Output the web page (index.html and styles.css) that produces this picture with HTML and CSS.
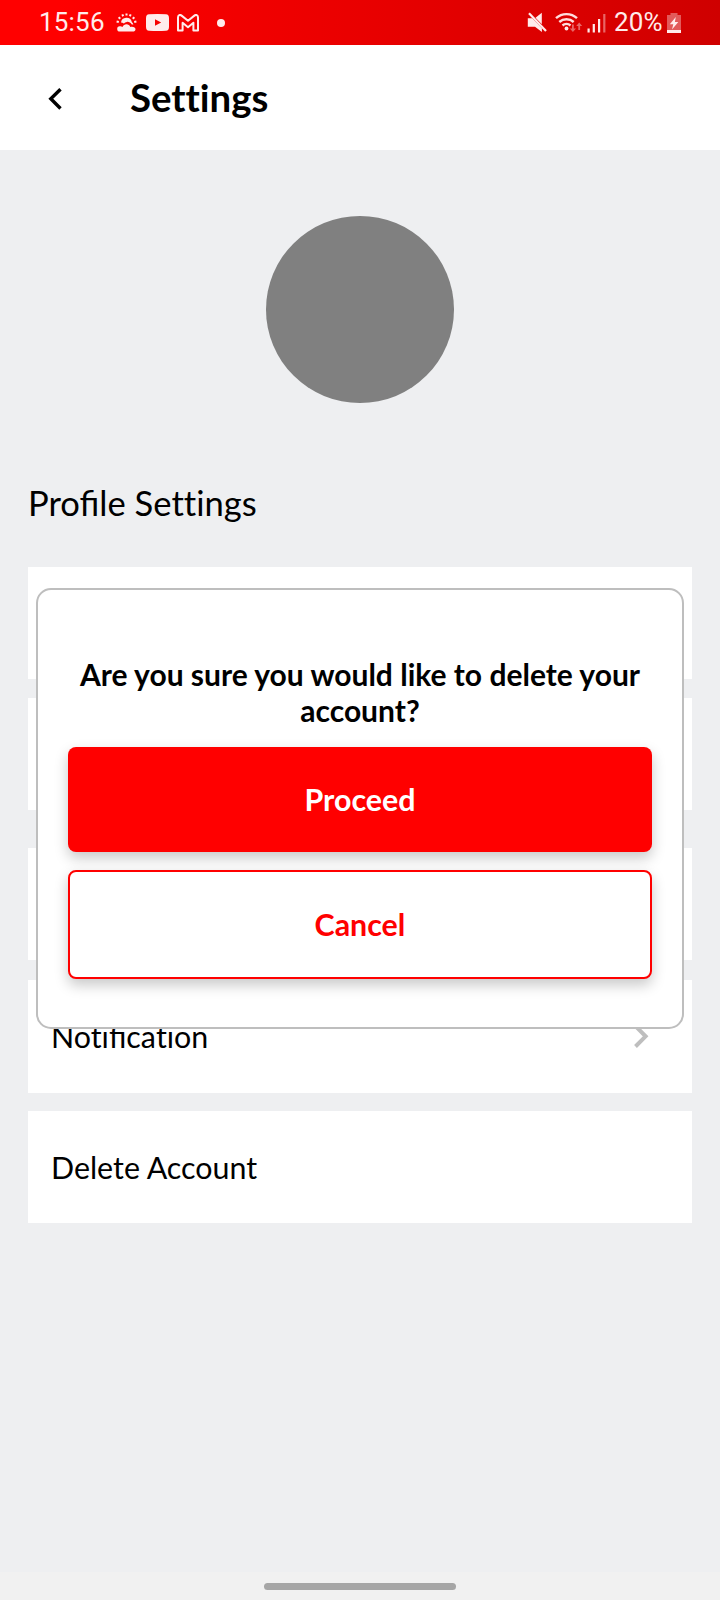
FILE: index.html
```html
<!DOCTYPE html>
<html lang="en">
<head>
<meta charset="utf-8">
<title>Settings</title>
<link rel="stylesheet" href="styles.css">
</head>
<body>
<div class="screen">
  <div class="status">
    <div class="status-left">
      <span class="time">15:56</span>
      <svg class="icon" width="22" height="20" viewBox="0 0 22 20">
        <path d="M5 9.600a5.500 5.500 0 0 1 10.800-.6c.9.700 1.400 1.500 1.600 2.500h-1.600c-1.300-2.100-3.100-2.900-5-2.600-1.200.2-2.200.8-2.900 1.700-1-.6-1.900-.9-2.900-1z"/>
        <path d="M4 18.600a2.700 2.700 0 0 1-.2-5.400c1-.1 1.900.1 2.700.7.8-1.700 2.200-2.600 3.900-2.600 1.900 0 3.300 1 3.900 2.600 3.100-.6 5.200.5 5.200 2.300 0 1.400-1.200 2.400-2.700 2.400z"/>
        <path class="rays" d="M10.500.4v2.200M6.300 1.400l.9 1.900M14.700 1.400l-.9 1.900M2.600 4.300l1.700 1.400M18.400 4.300l-1.700 1.400M.6 8.500l2.200.5M20.400 8.500l-2.200.5"/>
      </svg>
      <svg class="icon youtube" width="23" height="17" viewBox="0 0 23 17">
        <path fill-rule="evenodd" d="M3 .3Q11.500-.3 20 .3q3 .2 3 4v8.400q0 3.800-3 4-8.500.6-17 0-3-.2-3-4V4.300Q0 .5 3 .3zM9 5.200v6.600l6.200-3.300z"/>
      </svg>
      <svg class="icon gmail" width="23" height="18" viewBox="0 0 23 18">
        <path class="line" d="M1 3.500C1 1 3 .3 4.600 1.600L11 6.800l6.400-5.200C19 .3 21 1 21 3.500v13h-4.600V8.800L11 13.200 5.600 8.800v7.700H1z"/>
      </svg>
      <span class="dot"></span>
    </div>
    <div class="status-right">
      <svg class="icon" width="20" height="21" viewBox="0 0 20 21">
        <path d="M.8 6.300h4.400l9.700 9.900V20L8 14.800H.8zM8.500 5.800L14.800.8v11.500z"/>
        <path class="slash" d="M2 1.300L19 19"/>
      </svg>
      <svg class="icon wifi" width="28" height="21" viewBox="0 0 28 21">
        <path class="arc" d="M1 6.200a15.500 15.500 0 0 1 21 0M4.300 10a10.700 10.700 0 0 1 14.400 0M7.500 13.500a6 6 0 0 1 8 0"/>
        <circle cx="11.500" cy="16.500" r="1.900"/>
        <path class="faint" d="M17 12.500h1.800v4h2.200l-3.100 3.500-3.100-3.500H17zM23.300 18v-4h-2.100l3-3.500 3 3.500h-2.100v4z"/>
      </svg>
      <svg class="icon signal" width="19" height="20" viewBox="0 0 19 20">
        <path d="M.5 15.500h2.200v4H.5zM5.700 11h2.200v8.500H5.700zM11 6h2.200v13.500H11z"/>
        <path class="faint" d="M16.200 1h2.200v18.500h-2.200z"/>
      </svg>
      <span class="percent">20%</span>
      <svg class="icon battery" width="14" height="20" viewBox="0 0 14 20">
        <path class="shell" d="M3.500 0h7v2H14v15H0V2h3.500z"/>
        <path d="M0 17h14v3H0zM8.800 4L2.800 11.300h3.500L5 16.500 11.300 9H7.900z"/>
      </svg>
    </div>
  </div>

  <header class="header">
    <svg class="back" width="14" height="22" viewBox="0 0 14 22"><path d="M12.500 1.200L2.800 10.800l9.700 9.700"/></svg>
    <h1 class="title">Settings</h1>
  </header>

  <main class="content">
    <div class="avatar"></div>
    <h2 class="section">Profile <span class="plain">Settings</span></h2>
    <div class="row"></div>
    <div class="row"></div>
    <div class="row row-group"></div>
    <div class="row row-notification">
      <span class="label"><span class="plain">Noti</span>fica<span class="plain">tion</span></span>
      <svg class="chevron" width="15" height="25" viewBox="0 0 15 25"><path d="M1.500 2.200L11.600 12.300 1.500 22.500"/></svg>
    </div>
    <div class="row"><span>Delete Account</span></div>
  </main>

  <div class="navbar"><span class="pill"></span></div>

  <div class="dialog">
    <p class="question">Are you sure you would like to delete your account?</p>
    <button class="button proceed">Proceed</button>
    <button class="button cancel">Cancel</button>
  </div>
</div>
</body>
</html>
```
FILE: styles.css
```css
* { box-sizing: border-box; }
body { margin: 0; font-family: Lato, sans-serif; color: #000; }
.screen {
  position: relative;
  display: flex;
  flex-direction: column;
  width: 720px;
  height: 1600px;
  background: #eeeff1;
  overflow: hidden;
}
.status {
  display: flex;
  justify-content: space-between;
  flex: none;
  height: 45px;
  padding: 0 39px;
  background: linear-gradient(90deg, #ff0000 8%, #cf0000 100%);
  color: #ffebeb;
  font: 26px/45px Roboto, sans-serif;
}
.status-left, .status-right { display: flex; align-items: center; height: 45px; }
.icon { display: block; flex: none; fill: #ffebeb; }
.time { width: 77px; letter-spacing: 0.2px; }
.rays { fill: none; stroke: #ffebeb; stroke-width: 2; }
.youtube { margin-left: 8px; }
.gmail { margin-left: 8px; }
.line { fill: none; stroke: #ffebeb; stroke-width: 2; stroke-linejoin: round; }
.dot { width: 8px; height: 8px; margin-left: 17px; border-radius: 50%; background: #ffebeb; }
.slash { fill: none; stroke: #ffebeb; stroke-width: 2.2; }
.wifi { margin-left: 8px; }
.arc { fill: none; stroke: #ffdede; stroke-width: 2.4; }
.faint { fill: #e86666; }
.signal { margin-left: 4px; }
.percent { width: 53px; margin-left: 8px; white-space: nowrap; letter-spacing: 0.2px; }
.shell { fill: #e25a5a; }

.header {
  display: flex;
  align-items: center;
  flex: none;
  height: 105px;
  padding: 1px 0 0 48px;
  background: #fff;
}
.back { margin-top: 1px; fill: none; stroke: #000; stroke-width: 3.4; }
.title {
  margin: -3px 0 0 68px;
  font-size: 38.4px;
  font-weight: 700;
  line-height: 46px;
  font-variant-ligatures: none;
}
.plain { font-variant-ligatures: none; }

.content { flex: 1; padding: 66px 28px 0; }
.avatar { width: 188px; height: 187px; margin: 0 auto; border-radius: 50%; background: #808080; }
.section { margin: 78px 0 43px; font-size: 34.6px; font-weight: 400; line-height: 43px; }
.row {
  display: flex;
  align-items: center;
  justify-content: space-between;
  height: 112px;
  margin-bottom: 19px;
  padding: 0 43px 0 23px;
  background: #fff;
  font-size: 30.4px;
  line-height: 36px;
}
.row-group { margin-top: 38px; margin-bottom: 20px; }
.row-notification { height: 113px; margin-bottom: 18px; }
.label { margin-top: -2px; }
.chevron { fill: none; stroke: #bebebe; stroke-width: 4; }

.navbar {
  display: flex;
  justify-content: center;
  flex: none;
  height: 28px;
  padding-top: 11px;
  background: #f1f1f1;
}
.pill { width: 192px; height: 7px; border-radius: 4px; background: #a6a6a6; }

.dialog {
  position: absolute;
  top: 588px;
  left: 36px;
  width: 648px;
  height: 441px;
  padding: 66px 30px 0;
  border: 2px solid #bebebe;
  border-radius: 15px;
  background: #fff;
}
.question { margin: 0 0 19px; font-size: 30px; font-weight: 700; line-height: 36px; text-align: center; }
.button {
  display: block;
  width: 100%;
  padding: 0 0 2px;
  border: 0;
  border-radius: 8px;
  font: 700 30.4px/36px Lato, sans-serif;
  box-shadow: 0 6px 14px rgba(0, 0, 0, 0.22);
}
.proceed { height: 105px; margin-bottom: 18px; background: #f00; color: #fff; }
.cancel { height: 109px; border: 2px solid #f00; background: #fff; color: #f00; }
```
